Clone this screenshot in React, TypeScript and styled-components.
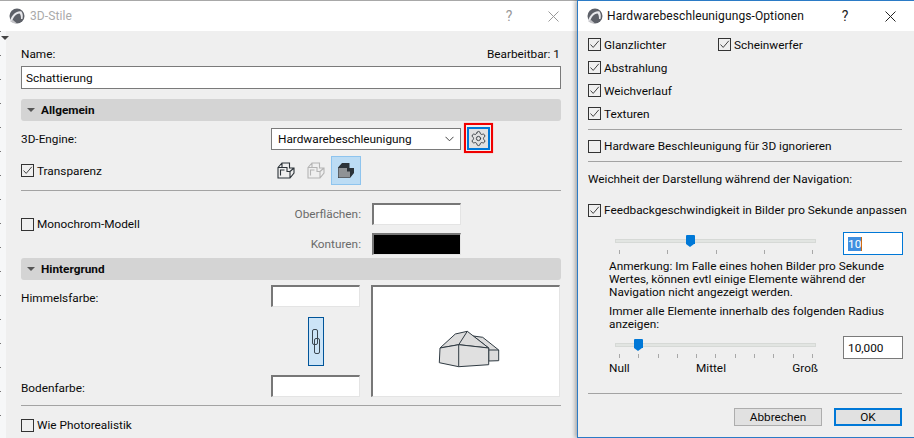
import React from 'react';
import styled, { createGlobalStyle } from 'styled-components';
import { Settings } from 'lucide-react';

let GlobalStyle = createGlobalStyle`
  html, body {
    margin: 0;
    padding: 0;
    width: 914px;
    height: 438px;
    overflow: hidden;
    background: #f4f6f8;
  }
  * { box-sizing: border-box; }
  body {
    font-family: Roboto, "Noto Sans", sans-serif;
    font-size: 11.8px;
    line-height: 14px;
    color: #0a0a0a;
  }
`;

let Desktop = styled.div`
  position: relative;
  width: 914px;
  height: 438px;
  overflow: hidden;
`;

let Window = styled.section<{ $left: number; $width: number; $front?: boolean }>`
  position: absolute;
  top: 0;
  left: ${p => p.$left}px;
  width: ${p => p.$width}px;
  height: 438px;
  display: flex;
  flex-direction: column;
  border-top: 1px solid ${p => (p.$front ? '#2b7bc6' : '#a8a8a8')};
  ${p =>
    p.$front &&
    `
    border-left: 1px solid #2b7bc6;
    border-bottom: 1px solid #2b7bc6;
    box-shadow: -2px 0 4px rgba(0, 0, 0, 0.3);
  `}
`;

let TitleBar = styled.header<{ $front?: boolean }>`
  flex: 0 0 30px;
  display: flex;
  align-items: center;
  background: #fff;
  padding-left: 9px;
  color: ${p => (p.$front ? '#111' : '#aaa')};
  font-size: 12px;
  letter-spacing: 0.1px;
`;

let TitleText = styled.span<{ $front?: boolean }>`
  margin-left: ${p => (p.$front ? 4 : 5)}px;
  flex: 1;
`;

let HelpMark = styled.span<{ $front?: boolean }>`
  width: 14px;
  text-align: center;
  color: ${p => (p.$front ? '#222' : '#999')};
  font-size: 14px;
`;

let CloseBox = styled.span<{ $gap: number; $right: number }>`
  display: flex;
  margin-left: ${p => p.$gap}px;
  margin-right: ${p => p.$right}px;
`;

let Frame = styled.div`
  flex: 1;
  display: flex;
  min-height: 0;
`;

// sliver of the window behind, visible on the left of the first dialog
let BackdropStrip = styled.div`
  position: relative;
  flex: 0 0 6px;
  background:
    repeating-linear-gradient(180deg, #777 0 1px, transparent 1px 24px) left top / 1px 100% no-repeat,
    #f6f7f8;
  &::after {
    content: '';
    position: absolute;
    left: 1px;
    top: 5px;
    border-left: 4px solid transparent;
    border-right: 4px solid transparent;
    border-top: 4px solid #444;
  }
`;

let StyleBody = styled.div`
  flex: 1;
  background: #efefef;
  padding: 16px 16px 0 15px;
  display: flex;
  flex-direction: column;
  min-width: 0;
`;

let SpaceBetween = styled.div`
  display: flex;
  justify-content: space-between;
  height: 14px;
  padding-right: 1px;
`;

let NameInput = styled.div`
  margin-top: 5px;
  height: 23px;
  padding-left: 4px;
  display: flex;
  align-items: center;
  background: #fff;
  border: 1px solid #7a7a7a;
`;

let SectionBar = styled.div<{ $top: number }>`
  margin-top: ${p => p.$top}px;
  flex: 0 0 22px;
  display: flex;
  align-items: center;
  padding-left: 6px;
  gap: 6px;
  background: #d4d4d4;
  border-radius: 3px;
  font-weight: 700;
`;

let DownTriangle = styled.span`
  border-left: 4px solid transparent;
  border-right: 4px solid transparent;
  border-top: 4px solid #555;
`;

let EngineRow = styled.div`
  margin-top: 2px;
  height: 30px;
  display: flex;
  align-items: center;
`;

let LabelColumn = styled.div`
  flex: 0 0 250px;
`;

let EngineLabel = styled(LabelColumn)`
  padding-top: 2px;
`;

let Select = styled.div`
  width: 190px;
  height: 22px;
  margin-top: 1px;
  padding: 0 6px;
  display: flex;
  align-items: center;
  justify-content: space-between;
  background: #fff;
  border: 1px solid #7a7a7a;
`;

let HighlightFrame = styled.div`
  margin-left: 3px;
  width: 29px;
  height: 30px;
  padding: 2px 1px;
  border: 2px solid #f00000;
  box-shadow: 0 0 1px #ff8080;
  display: flex;
  align-items: center;
  justify-content: center;
`;

let GearButton = styled.div`
  width: 23px;
  height: 23px;
  border: 2px solid #0078d7;
  background: #e1e1e1;
  display: flex;
  align-items: center;
  justify-content: center;
  color: #33393e;
`;

let TransparencyRow = styled.div`
  margin-top: 3px;
  height: 29px;
  display: flex;
  align-items: center;
`;

let ModeButtons = styled.div`
  display: flex;
  align-items: center;
`;

let ModeButton = styled.div<{ $active?: boolean }>`
  width: 30px;
  height: 29px;
  display: flex;
  align-items: center;
  justify-content: center;
  ${p => p.$active && 'background: #bcdcf4; border: 1px solid #8ec4ee;'}
`;

let Divider = styled.div<{ $top: number }>`
  margin-top: ${p => p.$top}px;
  flex: 0 0 1px;
  height: 1px;
  background: #a3a3a3;
`;

let CheckRow = styled.label<{ $top?: number }>`
  display: flex;
  align-items: center;
  gap: 3px;
  height: 14px;
  margin-top: ${p => p.$top ?? 0}px;
  white-space: nowrap;
`;

let CheckBox = styled.span`
  flex: 0 0 13px;
  width: 13px;
  height: 13px;
  border: 1px solid #333;
  display: flex;
  align-items: center;
  justify-content: center;
`;

let MonoGrid = styled.div`
  height: 67px;
  padding-top: 9px;
  display: flex;
  align-items: center;
`;

let MonoLeft = styled.div`
  flex: 0 0 250px;
  padding-bottom: 10px;
`;

let SwatchStack = styled.div`
  display: grid;
  grid-template-columns: 90px 89px;
  column-gap: 11px;
  row-gap: 8px;
  align-items: center;
  justify-items: end;
`;

let MutedLabel = styled.span`
  color: #6a6a6a;
`;

let Swatch = styled.div<{ $black?: boolean }>`
  width: 89px;
  height: 22px;
  background: ${p => (p.$black ? '#000' : '#fff')};
  border-style: solid;
  border-width: 2px 1px 1px 2px;
  border-color: #777 #e4e4e4 #e4e4e4 #777;
`;

let BackgroundGrid = styled.div`
  margin-top: 5px;
  height: 113px;
  display: grid;
  grid-template-columns: 250px 89px 189px;
`;

let SkyLabels = styled.div`
  display: flex;
  flex-direction: column;
  justify-content: space-between;
  padding: 6px 0 3px;
`;

let SkyColumn = styled.div`
  display: flex;
  flex-direction: column;
  justify-content: space-between;
  align-items: center;
  padding-bottom: 1px;
`;

let LinkButton = styled.div`
  width: 16px;
  height: 49px;
  background: #cce4f7;
  border: 1px solid #005499;
  display: flex;
  align-items: center;
  justify-content: center;
`;

let Preview = styled.div`
  margin-left: 11px;
  width: 189px;
  height: 112px;
  padding: 14px 0 0 6px;
  background: #fff;
  border-style: solid;
  border-width: 2px 1px 1px 2px;
  border-color: #777 #e4e4e4 #e4e4e4 #777;
  display: flex;
  align-items: center;
  justify-content: center;
`;

let OptionsBody = styled.div`
  flex: 1;
  background: #efefef;
  padding: 2px 13px 0 10px;
  display: flex;
  flex-direction: column;
  min-height: 0;
`;

let FirstChecks = styled.div`
  display: grid;
  grid-template-columns: 130px auto;
  grid-auto-rows: 23px;
  align-items: center;
`;

let Sentence = styled.div<{ $top: number; $left?: number }>`
  margin-top: ${p => p.$top}px;
  margin-left: ${p => p.$left ?? 0}px;
  line-height: 13px;
  white-space: pre-line;
`;

let SliderRow = styled.div<{ $top: number }>`
  margin-top: ${p => p.$top}px;
  height: 24px;
  display: flex;
  align-items: flex-start;
  padding-left: 27px;
`;

let SliderBox = styled.div`
  position: relative;
  flex: 0 0 201px;
  height: 22px;
`;

let Track = styled.div`
  margin-top: 6px;
  height: 4px;
  background: #e2e5e2;
  border: 1px solid #d6d9d6;
`;

let Thumb = styled.div<{ $at: number }>`
  position: absolute;
  left: ${p => p.$at}px;
  top: 2px;
  width: 9px;
  height: 9px;
  background: #0078d7;
  border-radius: 1px 1px 0 0;
  &::after {
    content: '';
    position: absolute;
    left: 0;
    top: 9px;
    border-left: 4.5px solid transparent;
    border-right: 4.5px solid transparent;
    border-top: 3px solid #0078d7;
  }
`;

let Ticks = styled.div`
  margin-top: 7px;
  padding: 0 3px 0 4px;
  display: flex;
  justify-content: space-between;
`;

let Tick = styled.i`
  width: 1px;
  height: 4px;
  background: #a8a8a8;
`;

let NumberField = styled.div<{ $focused?: boolean }>`
  flex: 0 0 60px;
  margin: -1px 0 0 27px;
  width: 60px;
  height: 23px;
  padding-left: 4px;
  display: flex;
  align-items: center;
  background: #fff;
  border: 1px solid ${p => (p.$focused ? '#0078d7' : '#7a7a7a')};
`;

let SelectedDigits = styled.span`
  background: #3f8fe0;
  color: #fff;
  border-right: 1px solid #c86a10;
`;

let ScaleLabels = styled.div`
  margin-left: 21px;
  width: 209px;
  display: flex;
  justify-content: space-between;
`;

let Footer = styled.div`
  margin-top: 14px;
  display: flex;
  justify-content: flex-end;
  gap: 12px;
`;

let DialogButton = styled.div<{ $primary?: boolean }>`
  width: ${p => (p.$primary ? 68 : 88)}px;
  height: 18px;
  display: flex;
  align-items: center;
  justify-content: center;
  background: #e1e1e1;
  border: ${p => (p.$primary ? '2px solid #0078d7' : '1px solid #adadad')};
`;

let AppLogo = () => (
  <svg width="16" height="16" viewBox="0 0 16 16">
    <circle cx="8" cy="8" r="7.5" fill="#5d6068" />
    <path d="M1 13 C3 6 8 2.5 12.5 3.5 C14 6 14 8 13.5 11 L12 11 C12 8 11.5 6.5 10.5 5.5 C7 6 4 9 3 14 Z" fill="#e8e8ec" />
    <path d="M1 13 Q4 16 8 15.5 L4 12 Z" fill="#c4c4c8" />
  </svg>
);

let CloseIcon = ({ color }: { color: string }) => (
  <svg width="11" height="11" viewBox="0 0 11 11">
    <path d="M0.5 0.5 L10.5 10.5 M10.5 0.5 L0.5 10.5" stroke={color} strokeWidth="1" fill="none" />
  </svg>
);

let CheckMark = () => (
  <svg width="11" height="11" viewBox="0 0 11 11">
    <path d="M1.5 5.5 L4.2 8.4 L9.8 1.8" stroke="#444" strokeWidth="1" fill="none" />
  </svg>
);

let Check = ({ checked, label, top }: { checked?: boolean; label: string; top?: number }) => (
  <CheckRow $top={top}>
    <CheckBox>{checked && <CheckMark />}</CheckBox>
    <span>{label}</span>
  </CheckRow>
);

let Chevron = () => (
  <svg width="9" height="6" viewBox="0 0 9 6">
    <path d="M0.5 0.8 L4.5 4.8 L8.5 0.8" stroke="#444" strokeWidth="1" fill="none" />
  </svg>
);

let WireCube = ({ color }: { color: string }) => (
  <svg width="18" height="17" viewBox="0 0 18 17">
    <path
      d="M1 5.5 L5 1 H12.5 V6 H17 V11 L13 16 H1 Z M1 5.5 H10 V9.5 H13 V16 M13 9.5 L17 6 M5 1 V5.5 M3.5 13.5 V8 H7.5"
      stroke={color}
      strokeWidth="1.1"
      fill="none"
    />
  </svg>
);

let SolidCube = () => (
  <svg width="18" height="17" viewBox="0 0 18 17">
    <path d="M1 5.5 L5 1 H12.5 V6 H17 V11 L13 16 H1 Z" fill="#2b3238" />
    <path d="M1.5 6 H10 V9.5 H13 V15.5 H1.5 Z" fill="#8f9295" />
  </svg>
);

let ChainIcon = () => (
  <svg width="8" height="25" viewBox="0 0 8 25">
    <rect x="0.5" y="0.5" width="5" height="15" rx="1.5" stroke="#3b4650" fill="none" />
    <rect x="2.5" y="9.5" width="5" height="15" rx="1.5" stroke="#3b4650" fill="none" />
  </svg>
);

let HouseDrawing = () => (
  <svg width="62" height="39" viewBox="0 0 62 39">
    <path d="M35.3 7 L44.7 8.3 L60.7 21 V31.7 L50.7 32 V19 Z" fill="#dcdcdc" stroke="#2f3a42" />
    <path d="M50.7 21 H60.7" stroke="#2f3a42" fill="none" />
    <path d="M2 19 L17.3 5 L29.3 2.3 L50.7 19 L20.7 15.7 Z" fill="#dcdcdc" stroke="#2f3a42" />
    <path d="M2 19 L20.7 15.7 L50.7 19 V35.7 L20.7 37.7 L1.3 33.7 Z" fill="#e0e0e0" stroke="#2f3a42" />
    <path d="M20.7 15.7 V37.7 M20.7 15.7 L29.3 2.3" stroke="#2f3a42" fill="none" />
  </svg>
);

let Slider = ({ at, tickCount }: { at: number; tickCount: number }) => (
  <SliderBox>
    <Track />
    <Thumb $at={at} />
    <Ticks>
      {Array.from({ length: tickCount }, (_, i) => (
        <Tick key={i} />
      ))}
    </Ticks>
  </SliderBox>
);

let StylesDialog = () => (
  <Window $left={0} $width={577}>
    <TitleBar>
      <AppLogo />
      <TitleText>3D-Stile</TitleText>
      <HelpMark>?</HelpMark>
      <CloseBox $gap={32} $right={18}>
        <CloseIcon color="#999" />
      </CloseBox>
    </TitleBar>
    <Frame>
      <BackdropStrip />
      <StyleBody>
        <SpaceBetween>
          <span>Name:</span>
          <span>Bearbeitbar: 1</span>
        </SpaceBetween>
        <NameInput>Schattierung</NameInput>
        <SectionBar $top={10}>
          <DownTriangle />
          Allgemein
        </SectionBar>
        <EngineRow>
          <EngineLabel>3D-Engine:</EngineLabel>
          <Select>
            Hardwarebeschleunigung
            <Chevron />
          </Select>
          <HighlightFrame>
            <GearButton>
              <Settings size={17} strokeWidth={1.3} />
            </GearButton>
          </HighlightFrame>
        </EngineRow>
        <TransparencyRow>
          <LabelColumn>
            <Check checked label="Transparenz" />
          </LabelColumn>
          <ModeButtons>
            <ModeButton>
              <WireCube color="#2b3238" />
            </ModeButton>
            <ModeButton>
              <WireCube color="#b4b4b4" />
            </ModeButton>
            <ModeButton $active>
              <SolidCube />
            </ModeButton>
          </ModeButtons>
        </TransparencyRow>
        <Divider $top={5} />
        <MonoGrid>
          <MonoLeft>
            <Check label="Monochrom-Modell" />
          </MonoLeft>
          <SwatchStack>
            <MutedLabel>Oberflächen:</MutedLabel>
            <Swatch />
            <MutedLabel>Konturen:</MutedLabel>
            <Swatch $black />
          </SwatchStack>
        </MonoGrid>
        <SectionBar $top={0}>
          <DownTriangle />
          Hintergrund
        </SectionBar>
        <BackgroundGrid>
          <SkyLabels>
            <span>Himmelsfarbe:</span>
            <span>Bodenfarbe:</span>
          </SkyLabels>
          <SkyColumn>
            <Swatch />
            <LinkButton>
              <ChainIcon />
            </LinkButton>
            <Swatch />
          </SkyColumn>
          <Preview>
            <HouseDrawing />
          </Preview>
        </BackgroundGrid>
        <Divider $top={7} />
        <Check label="Wie Photorealistik" top={12} />
      </StyleBody>
    </Frame>
  </Window>
);

let OptionsDialog = () => (
  <Window $left={577} $width={338} $front>
    <TitleBar $front>
      <AppLogo />
      <TitleText $front>Hardwarebeschleunigungs-Optionen</TitleText>
      <HelpMark $front>?</HelpMark>
      <CloseBox $gap={33} $right={19}>
        <CloseIcon color="#222" />
      </CloseBox>
    </TitleBar>
    <OptionsBody>
      <FirstChecks>
        <Check checked label="Glanzlichter" />
        <Check checked label="Scheinwerfer" />
        <Check checked label="Abstrahlung" />
        <span />
        <Check checked label="Weichverlauf" />
        <span />
        <Check checked label="Texturen" />
      </FirstChecks>
      <Divider $top={4} />
      <Check label="Hardware Beschleunigung für 3D ignorieren" top={9} />
      <Divider $top={8} />
      <Sentence $top={11}>Weichheit der Darstellung während der Navigation:</Sentence>
      <Check checked label="Feedbackgeschwindigkeit in Bilder pro Sekunde anpassen" top={17} />
      <SliderRow $top={16}>
        <Slider at={71} tickCount={5} />
        <NumberField $focused>
          <SelectedDigits>10</SelectedDigits>
        </NumberField>
      </SliderRow>
      <Sentence $top={3} $left={21}>
        {'Anmerkung: Im Falle eines hohen Bilder pro Sekunde\nWertes, können evtl einige Elemente während der\nNavigation nicht angezeigt werden.'}
      </Sentence>
      <Sentence $top={6} $left={21}>
        {'Immer alle Elemente innerhalb des folgenden Radius\nanzeigen:'}
      </Sentence>
      <SliderRow $top={6}>
        <Slider at={19} tickCount={11} />
        <NumberField>10,000</NumberField>
      </SliderRow>
      <ScaleLabels>
        <span>Null</span>
        <span>Mittel</span>
        <span>Groß</span>
      </ScaleLabels>
      <Divider $top={18} />
      <Footer>
        <DialogButton>Abbrechen</DialogButton>
        <DialogButton $primary>OK</DialogButton>
      </Footer>
    </OptionsBody>
  </Window>
);

export default function App() {
  return (
    <Desktop>
      <GlobalStyle />
      <StylesDialog />
      <OptionsDialog />
    </Desktop>
  );
}
